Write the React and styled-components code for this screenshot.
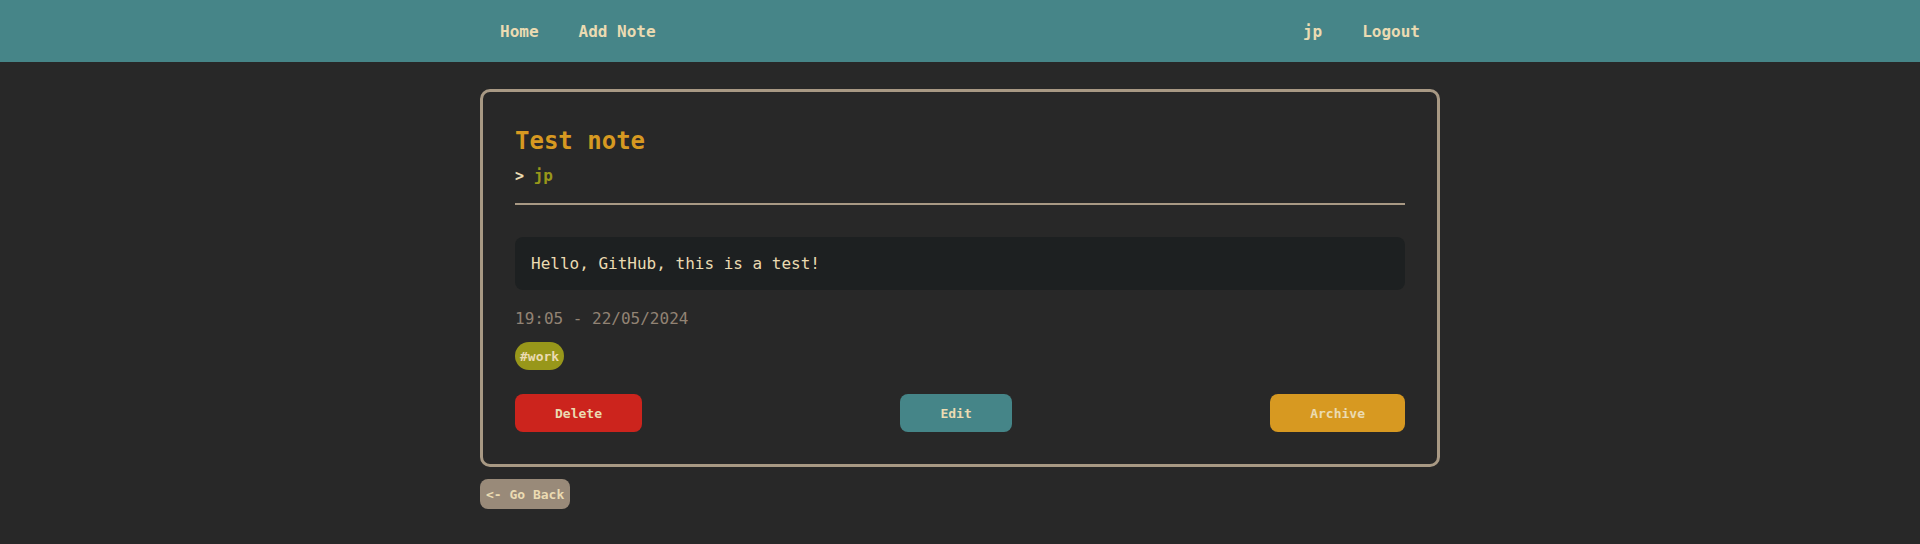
import React from "react"
import styled, { createGlobalStyle } from 'styled-components'

const Global = createGlobalStyle`
body {
  margin: 0;
  background-color: #282828;
  color: #ebdbb2;
  font-family: "DejaVu Sans Mono", "Liberation Mono", monospace;
}
`;

const App = () => {
    return (
        <>
            <Global />
            <Nav>
                <NavInner>
                    <NavGroup>
                        <NavLink>Home</NavLink>
                        <NavLink>Add Note</NavLink>
                    </NavGroup>
                    <NavGroup>
                        <NavLink>jp</NavLink>
                        <NavLink>Logout</NavLink>
                    </NavGroup>
                </NavInner>
            </Nav>
            <Main>
                <Card>
                    <Header>
                        <Title>Test note</Title>
                        <Author><Arrow>&gt;</Arrow> jp</Author>
                    </Header>
                    <Body>Hello, GitHub, this is a test!</Body>
                    <Date>19:05 - 22/05/2024</Date>
                    <Tags>
                        <Tag>#work</Tag>
                    </Tags>
                    <Actions>
                        <Button color="#cc241d">Delete</Button>
                        <Button color="#458588">Edit</Button>
                        <Button color="#d79921">Archive</Button>
                    </Actions>
                </Card>
                <BackButton>&lt;- Go Back</BackButton>
            </Main>
        </>
    )
}

export default App;

const Nav = styled.nav`
height: 62px;
background-color: #468588;
display: flex;
justify-content: center;
`;

const NavInner = styled.div`
width: 960px;
display: flex;
justify-content: space-between;
align-items: center;
`;

const NavGroup = styled.div`
display: flex;
align-items: center;
`;

const NavLink = styled.a`
padding: 0 20px;
font-size: 16px;
font-weight: 700;
color: #ebdbb2;
cursor: pointer;
`;

const Main = styled.main`
width: 960px;
margin: 27px auto 0;
display: flex;
flex-direction: column;
align-items: flex-start;
`;

const Card = styled.div`
box-sizing: border-box;
width: 960px;
border: 3px solid #a89984;
border-radius: 10px;
padding: 35px 32px 32px;
display: flex;
flex-direction: column;
`;

const Header = styled.div`
padding-bottom: 18px;
border-bottom: 2px solid #a89984;
`;

const Title = styled.h2`
margin: 0;
font-size: 24px;
font-weight: 700;
color: #d79921;
`;

const Author = styled.div`
margin-top: 11px;
font-size: 16px;
font-weight: 700;
color: #98971a;
`;

const Arrow = styled.span`
color: #ebdbb2;
font-size: 15px;
`;

const Body = styled.div`
margin-top: 32px;
padding: 17px 16px;
background-color: #1d2021;
border-radius: 8px;
font-size: 16px;
color: #ebdbb2;
`;

const Date = styled.div`
margin-top: 19px;
font-size: 16px;
color: #928374;
`;

const Tags = styled.div`
margin-top: 14px;
display: flex;
gap: 8px;
`;

const Tag = styled.span`
height: 28px;
padding: 0 5px;
border-radius: 14px;
background-color: #98971a;
display: flex;
align-items: center;
font-size: 13px;
font-weight: 700;
color: #ebdbb2;
`;

const Actions = styled.div`
margin-top: 24px;
display: flex;
justify-content: space-between;
`;

const Button = styled.button`
height: 38px;
padding: 0 40px;
border: none;
border-radius: 8px;
background-color: ${props => props.color};
color: #ebdbb2;
font-family: "DejaVu Sans Mono", "Liberation Mono", monospace;
font-size: 13px;
font-weight: 700;
cursor: pointer;
`;

const BackButton = styled.button`
margin-top: 12px;
height: 30px;
padding: 0 6px;
border: none;
border-radius: 8px;
background-color: #998a79;
color: #ebdbb2;
font-family: "DejaVu Sans Mono", "Liberation Mono", monospace;
font-size: 13px;
font-weight: 700;
cursor: pointer;
`;
